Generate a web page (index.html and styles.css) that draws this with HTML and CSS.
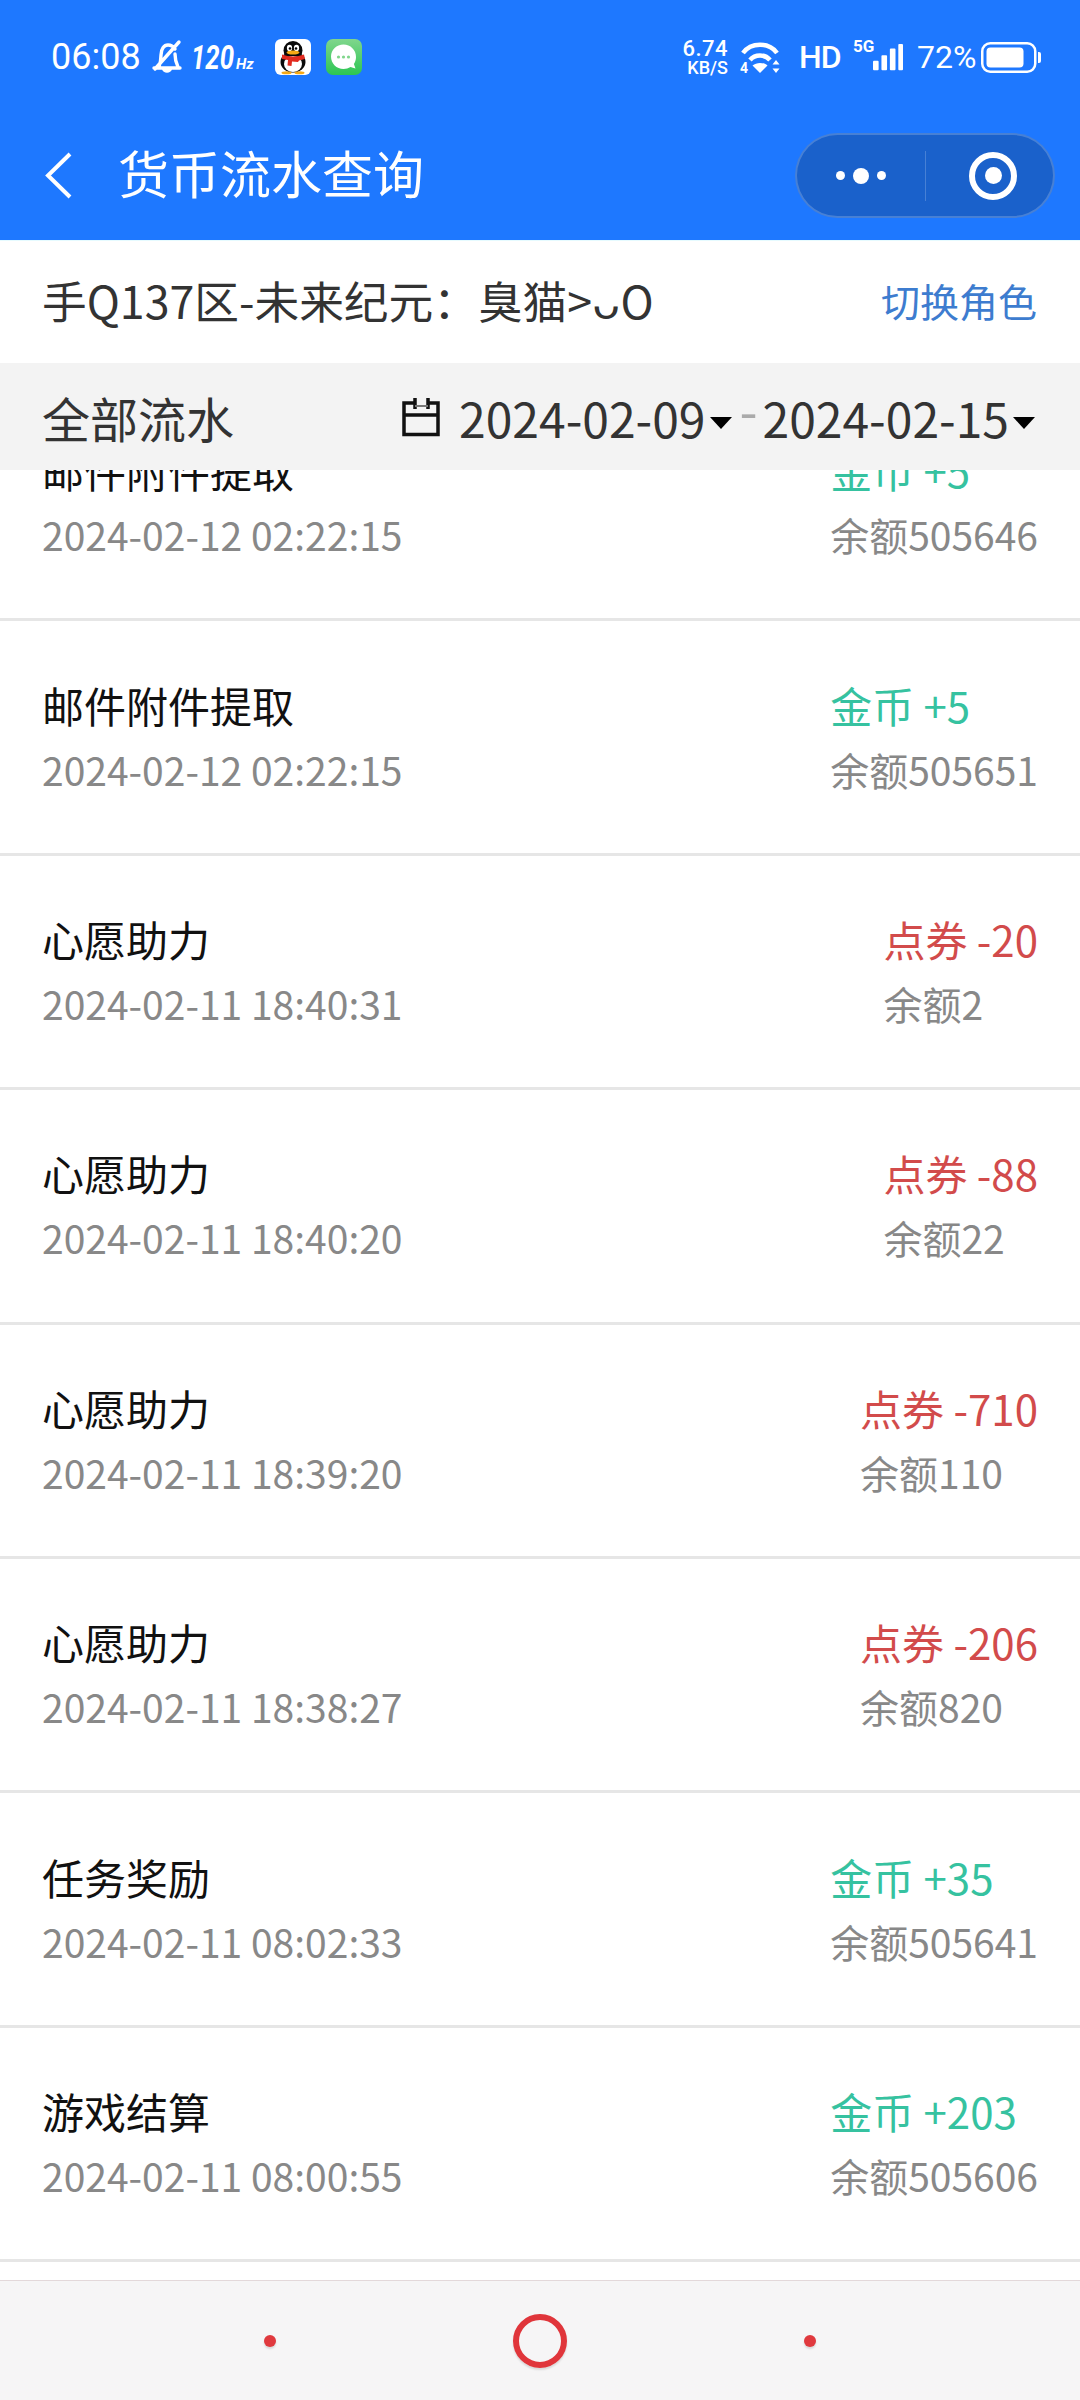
FILE: index.html
```html
<!DOCTYPE html>
<html lang="zh-CN">
<head>
<meta charset="utf-8">
<title>货币流水查询</title>
<link rel="stylesheet" href="styles.css">
</head>
<body>
<div class="screen">
  <header class="top">
    <div class="status">
      <div class="status-left">
        <span class="time">06:08</span>
        <svg class="bell" viewBox="0 0 32 36"><path d="M28 3 4 30M3 29h26M8 28c1-3 2-6 2-12 0-6 3-10 7-10 3 0 5 1 7 4M24 15c0 5 1 9 3 13" fill="none" stroke="#fff" stroke-width="3.400" stroke-linecap="round"/><path d="M11 30c1 5 9 5 10 0z" fill="#fff"/></svg>
        <span class="hz"><b>120</b><i>Hz</i></span>
        <svg class="app app-qq" viewBox="0 0 36 36">
          <rect width="36" height="36" rx="6" fill="#fff"/>
          <ellipse cx="18" cy="11.500" rx="9.500" ry="9.500" fill="#0a0a0a"/>
          <ellipse cx="18" cy="23" rx="12.500" ry="10.500" fill="#0a0a0a"/>
          <ellipse cx="18" cy="25" rx="9" ry="8" fill="#fff"/>
          <ellipse cx="14.500" cy="9" rx="2.600" ry="3.200" fill="#fff"/>
          <ellipse cx="21.500" cy="9" rx="2.600" ry="3.200" fill="#fff"/>
          <circle cx="15" cy="9.500" r="1.300" fill="#000"/>
          <circle cx="21" cy="9.500" r="1.300" fill="#000"/>
          <ellipse cx="18" cy="13.500" rx="6.500" ry="2" fill="#f5a916"/>
          <path d="M7 15.500c7 2.500 15 2.500 22 0l1 4.500-6 1.500-1 1.500-6-.5-.5 4.500-4-.5.500-5.500-6-1z" fill="#e22a1f"/>
          <ellipse cx="11.500" cy="33.700" rx="5" ry="1.500" fill="#f5a916"/>
          <ellipse cx="24.500" cy="33.700" rx="5" ry="1.500" fill="#f5a916"/>
        </svg>
        <svg class="app app-msg" viewBox="0 0 36 36">
          <defs><linearGradient id="msgbg" x1="0" y1="0" x2="0" y2="1"><stop offset="0" stop-color="#80d68c"/><stop offset="1" stop-color="#2cc653"/></linearGradient></defs>
          <rect width="36" height="36" rx="7" fill="url(#msgbg)"/>
          <path d="M17.500 5.500c7 0 12.500 5.500 12.500 12.500 0 2.600-.8 5-2.100 7l1.600 4.500-5-1.500c-2 1.300-4.400 2-7 2-7 0-12.500-5.500-12.500-12.500S10.500 5.500 17.500 5.500z" fill="#fff"/>
          <circle cx="12.500" cy="18" r="1.600" fill="#80d68c"/><circle cx="17.500" cy="18" r="1.600" fill="#80d68c"/><circle cx="22.500" cy="18" r="1.600" fill="#80d68c"/>
        </svg>
      </div>
      <div class="status-right">
        <span class="speed"><b>6.74</b><b class="unit">KB/S</b></span>
        <svg class="wifi" viewBox="0 0 40 34">
          <path d="M3 13C11 2 29 2 37 13M10 20c5-6 15-6 20 0" fill="none" stroke="#fff" stroke-width="4.500"/>
          <path d="M20 33l-7.500-7.500c4-3.500 11-3.500 15 0z" fill="#fff"/>
          <path d="M36 20l3.500 4.500h-7zM36 33l3.500-4.500h-7z" fill="#fff"/>
          <text x="0" y="33" class="wifi-num">4</text>
        </svg>
        <span class="hd">HD</span>
        <span class="net">5G</span>
        <svg class="signal" viewBox="0 0 32 28"><rect x="0" y="18" width="6" height="10" rx="1" fill="#fff"/><rect x="9" y="12" width="6" height="16" rx="1" fill="#fff"/><rect x="18" y="5" width="6" height="23" rx="1" fill="#fff"/><rect x="27" y="0" width="5" height="28" rx="1" fill="#fff"/></svg>
        <span class="pct">72%</span>
        <svg class="battery" viewBox="0 0 60 31"><rect x="1.250" y="1.250" width="53" height="28.500" rx="8" fill="none" stroke="#fff" stroke-width="2.500"/><rect x="5.500" y="5.500" width="37" height="20" rx="4" fill="#fff"/><path d="M57 10h1a2 2 0 0 1 2 2v7a2 2 0 0 1-2 2h-1z" fill="#fff"/></svg>
      </div>
    </div>
    <div class="nav">
      <svg class="back" viewBox="0 0 27 47"><path d="M25 2 3 23.500 25 45" fill="none" stroke="#fff" stroke-width="4"/></svg>
      <h1 class="title">货币流水查询</h1>
      <div class="capsule">
        <div class="cap-side cap-more"><i class="dot"></i><i class="dot dot-big"></i><i class="dot"></i></div>
        <div class="cap-side cap-target"><i class="target"></i></div>
      </div>
    </div>
  </header>

  <div class="role">
    <span class="role-name">手Q137区-未来纪元：臭猫&gt;ᴗO</span>
    <span class="role-switch">切换角色</span>
  </div>

  <div class="filter">
    <span class="filter-name">全部流水</span>
    <div class="range">
      <svg class="cal" viewBox="0 0 40 40"><path d="M14 6H3v31.500h34V6H27M3 18h34M14 1v11M27 1v11" fill="none" stroke="#111" stroke-width="3.500"/><path d="M14 9h13" stroke="#777" stroke-width="2"/></svg>
      <span class="date">2024-02-09</span><i class="caret"></i>
      <span class="dash">-</span>
      <span class="date">2024-02-15</span><i class="caret"></i>
    </div>
  </div>

  <main class="list">
    <div class="list-inner">
      <article class="row"><div class="col"><div class="name">邮件附件提取</div><div class="sub">2024-02-12 02:22:15</div></div><div class="col amt"><div class="val green">金币 +5</div><div class="sub">余额505646</div></div></article>
      <article class="row"><div class="col"><div class="name">邮件附件提取</div><div class="sub">2024-02-12 02:22:15</div></div><div class="col amt"><div class="val green">金币 +5</div><div class="sub">余额505651</div></div></article>
      <article class="row"><div class="col"><div class="name">心愿助力</div><div class="sub">2024-02-11 18:40:31</div></div><div class="col amt"><div class="val red">点券 -20</div><div class="sub">余额2</div></div></article>
      <article class="row"><div class="col"><div class="name">心愿助力</div><div class="sub">2024-02-11 18:40:20</div></div><div class="col amt"><div class="val red">点券 -88</div><div class="sub">余额22</div></div></article>
      <article class="row"><div class="col"><div class="name">心愿助力</div><div class="sub">2024-02-11 18:39:20</div></div><div class="col amt"><div class="val red">点券 -710</div><div class="sub">余额110</div></div></article>
      <article class="row"><div class="col"><div class="name">心愿助力</div><div class="sub">2024-02-11 18:38:27</div></div><div class="col amt"><div class="val red">点券 -206</div><div class="sub">余额820</div></div></article>
      <article class="row"><div class="col"><div class="name">任务奖励</div><div class="sub">2024-02-11 08:02:33</div></div><div class="col amt"><div class="val green">金币 +35</div><div class="sub">余额505641</div></div></article>
      <article class="row"><div class="col"><div class="name">游戏结算</div><div class="sub">2024-02-11 08:00:55</div></div><div class="col amt"><div class="val green">金币 +203</div><div class="sub">余额505606</div></div></article>
    </div>
  </main>

  <footer class="softkeys">
    <i class="key-dot"></i>
    <i class="key-ring"></i>
    <i class="key-dot"></i>
  </footer>
</div>
</body>
</html>
```

FILE: styles.css
```css
* { box-sizing: border-box; }
html, body { margin: 0; padding: 0; background: #fff; }
.screen {
  width: 1080px;
  height: 2400px;
  display: flex;
  flex-direction: column;
  overflow: hidden;
  font-family: "Noto Sans CJK SC", "Noto Sans", sans-serif;
}
.top {
  height: 240px;
  flex: none;
  background: #1e78ff;
  color: #fff;
}
.status {
  height: 114px;
  padding: 0 39px 0 51px;
  display: flex;
  align-items: center;
  justify-content: space-between;
  font-family: Roboto, sans-serif;
}
.status-left, .status-right { display: flex; align-items: center; }
.time { font-size: 36px; width: 88px; }
.bell { width: 32px; height: 36px; margin-left: 12px; }
.hz { margin-left: 8px; display: flex; align-items: baseline; font-style: italic; width: 64px; }
.hz b { display: inline-block; width: 44px; font-size: 33px; font-weight: 700; transform: scaleX(.78); transform-origin: left; }
.hz i { font-size: 15px; font-weight: 700; margin-left: 1px; }
.app { width: 36px; height: 36px; }
.app-qq { margin-left: 20px; }
.app-msg { margin-left: 15px; }
.speed { display: flex; flex-direction: column; align-items: flex-end; width: 48px; line-height: 1; }
.speed b { font-size: 22px; font-weight: 500; letter-spacing: .5px; line-height: 21px; }
.speed .unit { font-size: 18px; line-height: 17px; letter-spacing: 0; }
.wifi { width: 40px; height: 34px; margin-left: 12px; }
.wifi-num { font: 700 14px Roboto, sans-serif; fill: #fff; }
.hd { font-size: 32px; font-weight: 500; margin-left: 19px; width: 42px; letter-spacing: -1px; }
.net { font-size: 17px; font-weight: 700; margin: -22px 0 0 12px; width: 20px; white-space: nowrap; }
.signal { width: 30px; height: 28px; }
.pct { font-size: 32px; margin-left: 14px; width: 64px; white-space: nowrap; }
.battery { width: 60px; height: 31px; }

.nav {
  height: 85px;
  margin-top: 19px;
  padding: 0 25px 0 45px;
  display: flex;
  align-items: center;
}
.back { width: 27px; height: 47px; flex: none; }
.title { margin: 0 0 6px 46px; font-size: 51px; font-weight: 400; line-height: 1; flex: 1; }
.capsule {
  width: 260px;
  height: 85px;
  border-radius: 43px;
  background: #1a61cb;
  border: 2px solid rgba(255, 255, 255, .2);
  display: flex;
  align-items: center;
}
.cap-side { height: 50px; display: flex; align-items: center; justify-content: center; }
.cap-more { width: 129px; gap: 8px; border-right: 1px solid rgba(255, 255, 255, .2); }
.cap-target { flex: 1; padding-left: 7px; }
.dot { width: 9px; height: 9px; border-radius: 50%; background: #fff; }
.dot-big { width: 16px; height: 16px; }
.target {
  width: 48px;
  height: 48px;
  border-radius: 50%;
  border: 6px solid #fff;
  display: flex;
  align-items: center;
  justify-content: center;
}
.target::before { content: ""; width: 17px; height: 17px; border-radius: 50%; background: #fff; }

.role {
  height: 123px;
  flex: none;
  padding: 0 43px 5px 42px;
  display: flex;
  align-items: center;
  justify-content: space-between;
  border-top: 1px solid #e6fbff;
}
.role-name { font-size: 44.700px; color: #333; }
.role-switch { font-size: 39px; color: #3d7ccf; }

.filter {
  height: 107px;
  flex: none;
  padding: 0 45px 0 42px;
  background: #f3f3f3;
  display: flex;
  align-items: center;
  justify-content: space-between;
  color: #333;
}
.filter-name { font-size: 48px; }
.range { display: flex; align-items: center; }
.cal { width: 40px; height: 40px; margin-right: 18px; }
.date { font-size: 48px; }
.caret {
  width: 0;
  height: 0;
  margin: 12px 0 0 4px;
  border: 11px solid transparent;
  border-top: 12px solid #000;
  border-bottom: 0;
}
.dash { color: #aaa; font-size: 52px; line-height: 1; margin: -16px 5px 0 8px; }

.list { flex: 1; overflow: hidden; min-height: 0; }
.list-inner { margin-top: -83px; }
.row {
  height: 234.400px;
  padding: 0 42px 1px 42px;
  display: flex;
  align-items: center;
  justify-content: space-between;
  border-bottom: 3px solid #e6e6e6;
}
.col { display: flex; flex-direction: column; gap: 2px; }
.name, .val { font-size: 42px; line-height: 62px; }
.name { color: #111; }
.sub { font-size: 39px; line-height: 62px; color: #888; }
.green { color: #36c2a0; }
.red { color: #d24b4b; }

.softkeys {
  height: 120px;
  flex: none;
  background: #f6f5f6;
  border-top: 1px solid #e3d8da;
  padding: 0 264px;
  display: flex;
  align-items: center;
  justify-content: space-between;
}
.key-dot { width: 12px; height: 12px; border-radius: 50%; background: #e0393e; box-shadow: 0 2px 2px rgba(0,0,0,.12); }
.key-ring { width: 54px; height: 54px; border-radius: 50%; border: 6px solid #e0353b; box-shadow: 0 2px 2px rgba(0,0,0,.12); }
```
